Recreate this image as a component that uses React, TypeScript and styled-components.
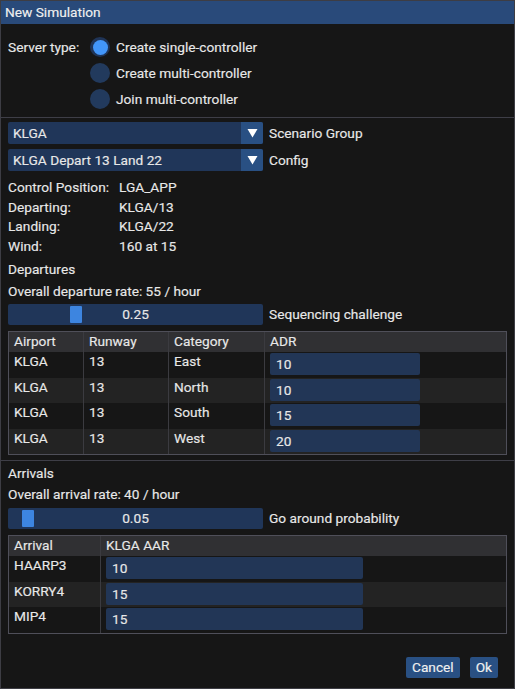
import { Fragment } from 'react';
import styled, { createGlobalStyle } from 'styled-components';

const GlobalStyle = createGlobalStyle`
  html, body {
    margin: 0;
    padding: 0;
    background: #0c0c0c;
  }
  body {
    font-family: Roboto, 'Liberation Sans', sans-serif;
    font-size: 13.7px;
    color: #e8e8e8;
  }
  * {
    box-sizing: border-box;
  }
`;

const serverTypes = ['Create single-controller', 'Create multi-controller', 'Join multi-controller'];

const info = [
  ['Control Position:', 'LGA_APP'],
  ['Departing:', 'KLGA/13'],
  ['Landing:', 'KLGA/22'],
  ['Wind:', '160 at 15'],
];

const departures = [
  { airport: 'KLGA', runway: '13', category: 'East', adr: '10' },
  { airport: 'KLGA', runway: '13', category: 'North', adr: '10' },
  { airport: 'KLGA', runway: '13', category: 'South', adr: '15' },
  { airport: 'KLGA', runway: '13', category: 'West', adr: '20' },
];

const arrivals = [
  { name: 'HAARP3', aar: '10' },
  { name: 'KORRY4', aar: '15' },
  { name: 'MIP4', aar: '15' },
];

const DownArrow = () => (
  <svg width='11' height='10' viewBox='0 0 11 10'>
    <polygon points='0.5,1 10.5,1 5.5,9.5' fill='#ffffff' />
  </svg>
);

const SliderControl = ({ value }: { value: number }) => (
  <Slider>
    <SliderGrab style={{ left: 2 + value * 239 }} />
    <SliderText>{value.toFixed(2)}</SliderText>
  </Slider>
);

const App = () => {
  return (
    <>
      <GlobalStyle />
      <Window>
        <TitleBar>New Simulation</TitleBar>

        <Body>
          <ServerRow>
            <FieldLabel>Server type:</FieldLabel>
            <RadioList>
              {serverTypes.map((type, i) => (
                <RadioOption key={type}>
                  <RadioDot $active={i === 0} />
                  {type}
                </RadioOption>
              ))}
            </RadioList>
          </ServerRow>

          <Separator $top={8} $bottom={4} />

          <ComboRow>
            <Combo>
              <ComboValue>KLGA</ComboValue>
              <ComboArrow>
                <DownArrow />
              </ComboArrow>
            </Combo>
            <SideLabel>Scenario Group</SideLabel>
          </ComboRow>

          <ComboRow $gap={5}>
            <Combo>
              <ComboValue>KLGA Depart 13 Land 22</ComboValue>
              <ComboArrow>
                <DownArrow />
              </ComboArrow>
            </Combo>
            <SideLabel>Config</SideLabel>
          </ComboRow>

          <InfoGrid>
            {info.map(([label, value]) => (
              <Fragment key={label}>
                <span>{label}</span>
                <span>{value}</span>
              </Fragment>
            ))}
          </InfoGrid>

          <TextLine $top={7}>Departures</TextLine>
          <TextLine $top={6}>Overall departure rate: 55 / hour</TextLine>

          <SliderRow $top={4}>
            <SliderControl value={0.25} />
            <SideLabel>Sequencing challenge</SideLabel>
          </SliderRow>

          <Table>
            <TableRow $cols='74px 85px 96px 1fr' $header>
              <Cell>Airport</Cell>
              <Cell>Runway</Cell>
              <Cell>Category</Cell>
              <Cell>ADR</Cell>
            </TableRow>
            {departures.map((row, i) => (
              <TableRow key={row.category} $cols='74px 85px 96px 1fr' $alt={i % 2 === 1}>
                <Cell>{row.airport}</Cell>
                <Cell>{row.runway}</Cell>
                <Cell>{row.category}</Cell>
                <Cell>
                  <NumberField $width={150}>{row.adr}</NumberField>
                </Cell>
              </TableRow>
            ))}
          </Table>

          <Separator $top={5} $bottom={4} />

          <TextLine>Arrivals</TextLine>
          <TextLine $top={5}>Overall arrival rate: 40 / hour</TextLine>

          <SliderRow $top={5}>
            <SliderControl value={0.05} />
            <SideLabel>Go around probability</SideLabel>
          </SliderRow>

          <Table>
            <TableRow $cols='91px 1fr' $header>
              <Cell>Arrival</Cell>
              <Cell>KLGA AAR</Cell>
            </TableRow>
            {arrivals.map((row, i) => (
              <TableRow key={row.name} $cols='91px 1fr' $alt={i % 2 === 1}>
                <Cell>{row.name}</Cell>
                <Cell>
                  <NumberField $width={257}>{row.aar}</NumberField>
                </Cell>
              </TableRow>
            ))}
          </Table>

          <Footer>
            <Button type='button'>Cancel</Button>
            <Button type='button'>Ok</Button>
          </Footer>
        </Body>
      </Window>
    </>
  );
};

export default App;

const Window = styled.div`
  display: flex;
  flex-direction: column;
  width: 515px;
  height: 689px;
  background: #161616;
  border: 1px solid #3d3d44;
  -webkit-text-stroke: 0.15px currentColor;
`;

const TitleBar = styled.div`
  height: 23px;
  padding-left: 4px;
  line-height: 23px;
  background: #294a7a;
  color: #f0f0f0;
`;

const Body = styled.div`
  display: flex;
  flex: 1;
  flex-direction: column;
  padding: 13px 7px 0 7px;
`;

const ServerRow = styled.div`
  display: flex;
`;

const FieldLabel = styled.div`
  width: 82px;
  line-height: 20px;
`;

const RadioList = styled.div`
  display: flex;
  flex-direction: column;
  gap: 6px;
`;

const RadioOption = styled.div`
  display: flex;
  align-items: center;
  gap: 6px;
  height: 20px;
  line-height: 20px;
`;

const RadioDot = styled.span<{ $active?: boolean }>`
  display: flex;
  align-items: center;
  justify-content: center;
  width: 20px;
  height: 20px;
  border-radius: 50%;
  background: ${({ $active }) => ($active ? '#1f3457' : '#223a5d')};

  &::after {
    content: '';
    display: ${({ $active }) => ($active ? 'block' : 'none')};
    width: 15px;
    height: 15px;
    border-radius: 50%;
    background: #4296fa;
  }
`;

const Separator = styled.div<{ $top: number; $bottom: number }>`
  height: 1px;
  margin: ${({ $top, $bottom }) => `${$top}px -7px ${$bottom}px`};
  background: #3e3e47;
`;

const ComboRow = styled.div<{ $gap?: number }>`
  display: flex;
  align-items: center;
  gap: 6px;
  margin-top: ${({ $gap }) => $gap ?? 0}px;
`;

const Combo = styled.div`
  display: flex;
  width: 255px;
  height: 22px;
  border-radius: 2px;
  background: #203659;
  overflow: hidden;
`;

const ComboValue = styled.div`
  flex: 1;
  padding-left: 5px;
  line-height: 22px;
`;

const ComboArrow = styled.div`
  display: flex;
  align-items: center;
  justify-content: center;
  width: 22px;
  background: #295083;
`;

const SideLabel = styled.span`
  line-height: 22px;
`;

const InfoGrid = styled.div`
  display: grid;
  grid-template-columns: 111px auto;
  row-gap: 3.7px;
  margin-top: 8px;
  line-height: 16px;
`;

const TextLine = styled.div<{ $top?: number }>`
  margin-top: ${({ $top }) => $top ?? 0}px;
  line-height: 16px;
`;

const SliderRow = styled.div<{ $top: number }>`
  display: flex;
  align-items: center;
  gap: 6px;
  margin-top: ${({ $top }) => $top}px;
`;

const Slider = styled.div`
  position: relative;
  width: 255px;
  height: 21px;
  border-radius: 2px;
  background: #203659;
`;

const SliderGrab = styled.span`
  position: absolute;
  top: 2px;
  bottom: 2px;
  width: 12px;
  border-radius: 1px;
  background: #3d85e0;
`;

const SliderText = styled.div`
  position: relative;
  line-height: 21px;
  text-align: center;
`;

const Table = styled.div`
  margin-top: 6px;
  border: 1px solid #4f4f59;
`;

const TableRow = styled.div<{ $cols: string; $header?: boolean; $alt?: boolean }>`
  display: grid;
  grid-template-columns: ${({ $cols }) => $cols};
  height: ${({ $header }) => ($header ? '20px' : '25.5px')};
  background: ${({ $header, $alt }) => ($header ? '#303033' : $alt ? 'rgba(255, 255, 255, 0.06)' : 'transparent')};
`;

const Cell = styled.div`
  padding: 1px 0 0 5px;
  line-height: 16px;
  white-space: nowrap;

  & + & {
    border-left: 1px solid #3b3b40;
  }

  &:has(> span) {
    padding-top: 1px;
  }
`;

const NumberField = styled.span<{ $width: number }>`
  display: block;
  width: ${({ $width }) => $width}px;
  height: 22px;
  padding-left: 6px;
  line-height: 22px;
  border-radius: 2px;
  background: #223656;
`;

const Footer = styled.div`
  display: flex;
  justify-content: flex-end;
  gap: 10px;
  margin-top: auto;
  padding: 0 9px 10px 0;
`;

const Button = styled.button`
  height: 21px;
  padding: 0 6px;
  border: none;
  border-radius: 2px;
  background: #295083;
  color: #f0f0f0;
  font-family: inherit;
  font-size: inherit;
  line-height: 21px;
`;
